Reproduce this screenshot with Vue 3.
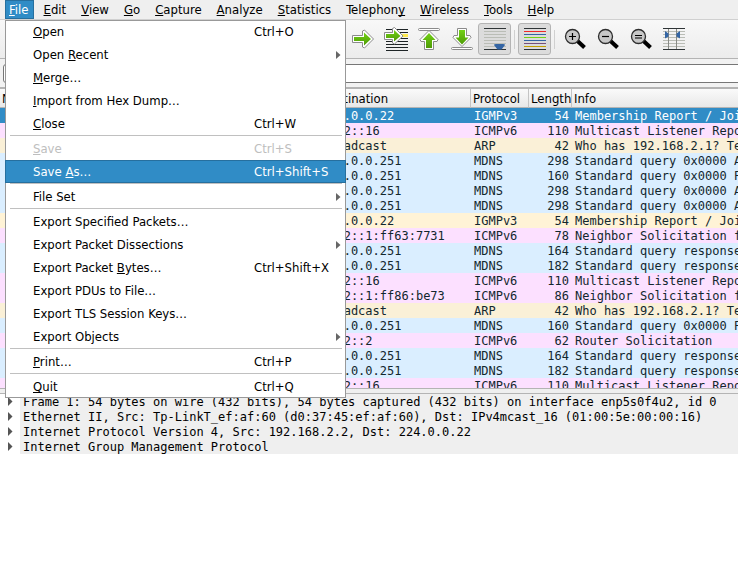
<template>
  <div class="window">
    <nav class="menubar">
      <button
        v-for="m in menus"
        :key="m.label"
        type="button"
        class="menu-title"
        :class="{ open: m.label === openMenu }"
        @click="openMenu = openMenu === m.label ? '' : m.label"
      >{{ m.label.slice(0, m.key) }}<u>{{ m.label[m.key] }}</u>{{ m.label.slice(m.key + 1) }}</button>
    </nav>

    <div class="toolbar">
      <button type="button" class="tool" aria-label="Go to next packet">
        <svg width="24" height="24" viewBox="0 0 24 24">
          <defs>
            <linearGradient id="green" x1="0" y1="0" x2="0" y2="1">
              <stop offset="0" stop-color="#73d216" />
              <stop offset="1" stop-color="#4e9a06" />
            </linearGradient>
          </defs>
          <path d="M1.500 8.500H11.500V4L13.500 3L22.500 12L13.500 21L11.500 20V15.500H1.500Z" class="halo" />
          <path d="M3 10H13V5.500L20 12L13 18.500V14H3Z" class="green" />
        </svg>
      </button>
      <button type="button" class="tool" aria-label="Go to packet">
        <svg width="24" height="24" viewBox="0 0 24 24">
          <path d="M2 2.500H24M2 5.500H24M2 11.500H24M2 14.500H24M2 17.500H24M2 20.500H24M2 23.500H24" stroke="#1e2426" />
          <rect x="17" y="7" width="7" height="3" fill="#fce94f" />
          <path d="M.5 5.500H8.500V1.500L10.500 .5L19 9L10.500 17L8.500 16V12.500H.5Z" class="halo" />
          <path d="M2 7H10V3L16.500 9L10 14.500V11H2Z" class="green" />
        </svg>
      </button>
      <button type="button" class="tool" aria-label="Go to first packet">
        <svg width="24" height="24" viewBox="0 0 24 24">
          <rect x="1.500" y="1.500" width="21" height="2" rx="1" fill="#fff" stroke="#8b8b8b" />
          <path d="M12 3.500L21 12.500L20 14.500H16.500V22.500H7.500V14.500H4L3 12.500Z" class="halo" />
          <path d="M12 6L18.500 13H15V21H9V13H5.500Z" class="green" />
        </svg>
      </button>
      <button type="button" class="tool" aria-label="Go to last packet">
        <svg width="24" height="24" viewBox="0 0 24 24">
          <rect x="1.500" y="20.500" width="21" height="2" rx="1" fill="#fff" stroke="#8b8b8b" />
          <path d="M12 19.500L21 10.500L20 8.500H16.500V1.500H7.500V8.500H4L3 10.500Z" class="halo" />
          <path d="M12 17.500L18.500 10.500H15V3H9V10.500H5.500Z" class="green" />
        </svg>
      </button>
      <button type="button" class="tool pressed" aria-label="Auto scroll">
        <svg width="22" height="22" viewBox="0 0 22 22">
          <path d="M0 .5H22M0 21.500H22" stroke="#2e3436" />
          <path d="M0 3.500H22M0 6.500H22M0 9.500H22M0 12.500H22M0 15.500H22M0 18.500H22" stroke="#babdb6" />
          <path d="M10 17Q10 16 12 16H19Q21 16 21 17L17.500 21.500H13.500Z" fill="#3465a4" />
        </svg>
      </button>
      <span class="tool-sep"></span>
      <button type="button" class="tool pressed" aria-label="Colorize packets">
        <svg width="22" height="22" viewBox="0 0 22 22">
          <path v-for="(c, i) in stripes" :key="i" :d="`M0 ${i * 3 + 0.5}H22`" :stroke="c" />
        </svg>
      </button>
      <span class="tool-sep"></span>
      <button v-for="z in zooms" :key="z.label" type="button" class="tool" :aria-label="z.label">
        <svg width="24" height="24" viewBox="0 0 24 24">
          <path d="M14 13.500L21.500 20.500" stroke="#000" stroke-width="4" />
          <circle cx="9.500" cy="9.500" r="7" fill="#c8c8c8" stroke="#2e2e2e" stroke-width="1.300" />
          <path :d="z.d" stroke="#000" stroke-width="1.200" />
        </svg>
      </button>
      <button type="button" class="tool" aria-label="Resize columns">
        <svg width="22" height="22" viewBox="0 0 22 22">
          <path d="M0 3.500H22M0 6.500H22M0 9.500H22M0 12.500H22M0 15.500H22M0 18.500H22" stroke="#babdb6" />
          <path d="M5.500 0V22M13.500 0V22" stroke="#888a85" />
          <path d="M0 .5H22M0 21.500H22" stroke="#2e3436" />
          <path d="M2 3L5.500 5.500V8.500L2 10.500ZM17 3L13.500 5.500V8.500L17 10.500Z" fill="#3465a4" />
        </svg>
      </button>
    </div>

    <div class="filterbar">
      <input v-model="filter" type="text" aria-label="Display filter" />
    </div>

    <div class="packet-list">
      <table>
        <colgroup>
          <col class="c-no" />
          <col class="c-time" />
          <col class="c-src" />
          <col class="c-dst" />
          <col class="c-proto" />
          <col class="c-len" />
          <col />
        </colgroup>
        <thead>
          <tr>
            <th v-for="h in headers" :key="h">{{ h }}</th>
          </tr>
        </thead>
        <tbody>
          <tr
            v-for="(p, i) in packets"
            :key="i"
            :class="[p[1].toLowerCase(), { selected: i === selected }]"
            @click="selected = i"
          >
            <td></td>
            <td></td>
            <td></td>
            <td>{{ p[0] }}</td>
            <td>{{ p[1] }}</td>
            <td class="num">{{ p[2] }}</td>
            <td>{{ p[3] }}</td>
          </tr>
        </tbody>
      </table>
    </div>

    <div class="splitter"></div>

    <ul class="details">
      <li v-for="d in details" :key="d">
        <svg width="20" height="15" viewBox="0 0 20 15"><path d="M8 3L12.500 7.500L8 12Z" fill="#555" /></svg>
        <span>{{ d }}</span>
      </li>
    </ul>

    <div v-if="openMenu === 'File'" class="dropdown" role="menu">
      <template v-for="(item, i) in fileMenu" :key="i">
        <hr v-if="item === null" />
        <button
          v-else
          type="button"
          role="menuitem"
          class="item"
          :class="{ active: item.label === 'Save As…' }"
          :disabled="item.disabled"
        >
          <span class="label">{{ item.label.slice(0, item.key) }}<u v-if="item.key !== undefined">{{ item.label[item.key] }}</u>{{ item.key === undefined ? '' : item.label.slice(item.key + 1) }}</span>
          <span v-if="item.shortcut" class="shortcut">{{ item.shortcut }}</span>
          <svg v-if="item.sub" class="sub" width="5" height="8" viewBox="0 0 5 8"><path d="M0 0L4.500 4L0 8Z" fill="#666" /></svg>
        </button>
      </template>
    </div>
  </div>
</template>

<script setup>
import { ref } from 'vue';

const openMenu = ref('File');
const filter = ref('');
const selected = ref(0);

// key is the index of the underlined letter
const menus = [
  { label: 'File', key: 0 },
  { label: 'Edit', key: 0 },
  { label: 'View', key: 0 },
  { label: 'Go', key: 0 },
  { label: 'Capture', key: 0 },
  { label: 'Analyze', key: 0 },
  { label: 'Statistics', key: 0 },
  { label: 'Telephony', key: 8 },
  { label: 'Wireless', key: 0 },
  { label: 'Tools', key: 0 },
  { label: 'Help', key: 0 }
];

// null draws a separator
const fileMenu = [
  { label: 'Open', key: 0, shortcut: 'Ctrl+O' },
  { label: 'Open Recent', key: 5, sub: true },
  { label: 'Merge…', key: 0 },
  { label: 'Import from Hex Dump…', key: 0 },
  { label: 'Close', key: 0, shortcut: 'Ctrl+W' },
  null,
  { label: 'Save', key: 0, shortcut: 'Ctrl+S', disabled: true },
  { label: 'Save As…', key: 5, shortcut: 'Ctrl+Shift+S' },
  null,
  { label: 'File Set', sub: true },
  null,
  { label: 'Export Specified Packets…' },
  { label: 'Export Packet Dissections', sub: true },
  { label: 'Export Packet Bytes…', key: 14, shortcut: 'Ctrl+Shift+X' },
  { label: 'Export PDUs to File…' },
  { label: 'Export TLS Session Keys…' },
  { label: 'Export Objects', sub: true },
  null,
  { label: 'Print…', key: 0, shortcut: 'Ctrl+P' },
  null,
  { label: 'Quit', key: 0, shortcut: 'Ctrl+Q' }
];

const stripes = ['#2e3436', '#ef2929', '#3465a4', '#73d216', '#3465a4', '#75507b', '#c4a000', '#2e3436'];

const zooms = [
  { label: 'Zoom in', d: 'M6 9.500H13M9.500 6V13' },
  { label: 'Zoom out', d: 'M6 9.500H13' },
  { label: 'Normal size', d: 'M6 8.500H13M6 11H13' }
];

const headers = ['No.', 'Time', 'Source', 'Destination', 'Protocol', 'Length', 'Info'];

// destination, protocol, length, info
const packets = [
  ['224.0.0.22', 'IGMPv3', 54, 'Membership Report / Join group'],
  ['ff02::16', 'ICMPv6', 110, 'Multicast Listener Report Message v2'],
  ['Broadcast', 'ARP', 42, 'Who has 192.168.2.1? Tell 192.168.2.2'],
  ['224.0.0.251', 'MDNS', 298, 'Standard query 0x0000 ANY'],
  ['224.0.0.251', 'MDNS', 160, 'Standard query 0x0000 PTR'],
  ['224.0.0.251', 'MDNS', 298, 'Standard query 0x0000 ANY'],
  ['224.0.0.251', 'MDNS', 298, 'Standard query 0x0000 ANY'],
  ['224.0.0.22', 'IGMPv3', 54, 'Membership Report / Join group'],
  ['ff02::1:ff63:7731', 'ICMPv6', 78, 'Neighbor Solicitation for fe80::'],
  ['224.0.0.251', 'MDNS', 164, 'Standard query response 0x0000'],
  ['224.0.0.251', 'MDNS', 182, 'Standard query response 0x0000'],
  ['ff02::16', 'ICMPv6', 110, 'Multicast Listener Report Message v2'],
  ['ff02::1:ff86:be73', 'ICMPv6', 86, 'Neighbor Solicitation for fe80::'],
  ['Broadcast', 'ARP', 42, 'Who has 192.168.2.1? Tell 192.168.2.2'],
  ['224.0.0.251', 'MDNS', 160, 'Standard query 0x0000 PTR'],
  ['ff02::2', 'ICMPv6', 62, 'Router Solicitation'],
  ['224.0.0.251', 'MDNS', 164, 'Standard query response 0x0000'],
  ['224.0.0.251', 'MDNS', 182, 'Standard query response 0x0000'],
  ['ff02::16', 'ICMPv6', 110, 'Multicast Listener Report Message v2']
];

const details = [
  'Frame 1: 54 bytes on wire (432 bits), 54 bytes captured (432 bits) on interface enp5s0f4u2, id 0',
  'Ethernet II, Src: Tp-LinkT_ef:af:60 (d0:37:45:ef:af:60), Dst: IPv4mcast_16 (01:00:5e:00:00:16)',
  'Internet Protocol Version 4, Src: 192.168.2.2, Dst: 224.0.0.22',
  'Internet Group Management Protocol'
];
</script>

<style>
body {
  margin: 0;
}
</style>

<style scoped>
.window {
  position: relative;
  display: flex;
  flex-direction: column;
  height: 100vh;
  overflow: hidden;
  background: #efefef;
  color: #000;
  font-family: "DejaVu Sans Condensed", "DejaVu Sans", sans-serif;
  font-size: 13px;
}
button {
  font: inherit;
  color: inherit;
  border: none;
  background: none;
  padding: 0;
}
u {
  text-underline-offset: 1px;
  text-decoration-thickness: 1px;
  text-decoration-skip-ink: none;
}
.menubar {
  display: flex;
  gap: 6px;
  height: 19px;
  padding-left: 5px;
  border-bottom: 1px solid #d0d0d0;
}
.menu-title {
  padding: 0 5px 0 4px;
  line-height: 19px;
  white-space: nowrap;
}
.menu-title.open {
  background: #308cc6;
  color: #fff;
  box-shadow: inset 0 0 0 1px #266f9e;
}
.toolbar {
  display: flex;
  align-items: center;
  height: 38px;
  padding-left: 346px;
  background: linear-gradient(#f8f8f8, #ececec);
  border-bottom: 1px solid #b4b4b4;
}
.tool {
  display: flex;
  align-items: center;
  justify-content: center;
  flex: none;
  width: 33px;
  height: 32px;
}
.tool.pressed {
  background: #dcdcdc;
  border: 1px solid #b4b4b4;
  border-radius: 3px;
}
.tool-sep {
  flex: none;
  width: 1px;
  height: 19px;
  margin: 0 3px;
  background: #d0d0d0;
}
.halo {
  fill: #fff;
  stroke: #8b8b8b;
  stroke-linejoin: round;
}
.green {
  fill: url(#green);
}
.filterbar {
  display: flex;
  padding: 5px 0 4px 3px;
  background: #f2f2f2;
  border-bottom: 2px solid #b4b4b4;
}
.filterbar input {
  flex: 1;
  box-sizing: border-box;
  height: 19px;
  margin-right: -4px;
  padding: 0 6px;
  border: 1px solid #777;
  border-radius: 3px;
  background: #fff;
  font: inherit;
  outline: none;
}
.packet-list {
  flex: 299 1 0;
  min-height: 0;
  overflow: hidden;
  background: #fff;
}
table {
  width: 100%;
  table-layout: fixed;
  border-collapse: separate;
  border-spacing: 0;
}
.c-no {
  width: 60px;
}
.c-time {
  width: 120px;
}
.c-src {
  width: 139px;
}
.c-dst {
  width: 152px;
}
.c-proto {
  width: 58px;
}
.c-len {
  width: 43px;
}
th {
  box-sizing: border-box;
  height: 19px;
  padding: 2px 0 0 2px;
  border-right: 1px solid #c4c4c4;
  border-bottom: 1px solid #b4b4b4;
  background: linear-gradient(#fafafa, #e8e8e8);
  font-weight: normal;
  line-height: 16px;
  text-align: left;
  white-space: nowrap;
  overflow: hidden;
}
th:last-child {
  border-right: none;
}
td {
  height: 13px;
  padding: 2px 3px 0;
  line-height: 13px;
  white-space: nowrap;
  overflow: hidden;
}
tbody,
.details {
  font-family: "DejaVu Sans Mono", monospace;
  font-size: 12px;
}
tbody tr {
  color: #12272e;
}
.igmpv3 {
  background: #fff3d6;
}
.icmpv6 {
  background: #fce0ff;
}
.arp {
  background: #faf0d7;
}
.mdns {
  background: #daeeff;
}
tr.selected {
  background: #308cc6;
  color: #fff;
}
.num {
  text-align: right;
}
.splitter {
  height: 4px;
  border-top: 1px solid #b4b4b4;
  border-bottom: 1px solid #b4b4b4;
}
.details {
  flex: 180 1 0;
  min-height: 0;
  margin: 0;
  padding: 0;
  list-style: none;
  background: #fff;
}
.details li {
  display: flex;
  height: 15px;
  line-height: 13px;
  white-space: nowrap;
}
.details svg {
  flex: none;
}
.details span {
  flex: 1;
  padding: 2px 0 0 3px;
  background: #efefef;
}
.dropdown {
  position: absolute;
  top: 20px;
  left: 5px;
  width: 341px;
  background: #fff;
  box-shadow: inset 0 0 0 1px #999;
}
.item {
  display: flex;
  align-items: center;
  width: 100%;
  height: 23px;
  padding: 0 3px 0 28px;
  text-align: left;
}
.item .label {
  flex: 1;
}
.item .shortcut {
  width: 89px;
}
.item .sub {
  margin-right: 2px;
}
.item:disabled {
  color: #bebebe;
}
.item.active {
  background: #308cc6;
  color: #fff;
  box-shadow: inset 0 0 0 1px #266f9e;
}
.dropdown hr {
  height: 1px;
  margin: 0 4px 1px 5px;
  border: none;
  background: #c0c0c0;
}
</style>
